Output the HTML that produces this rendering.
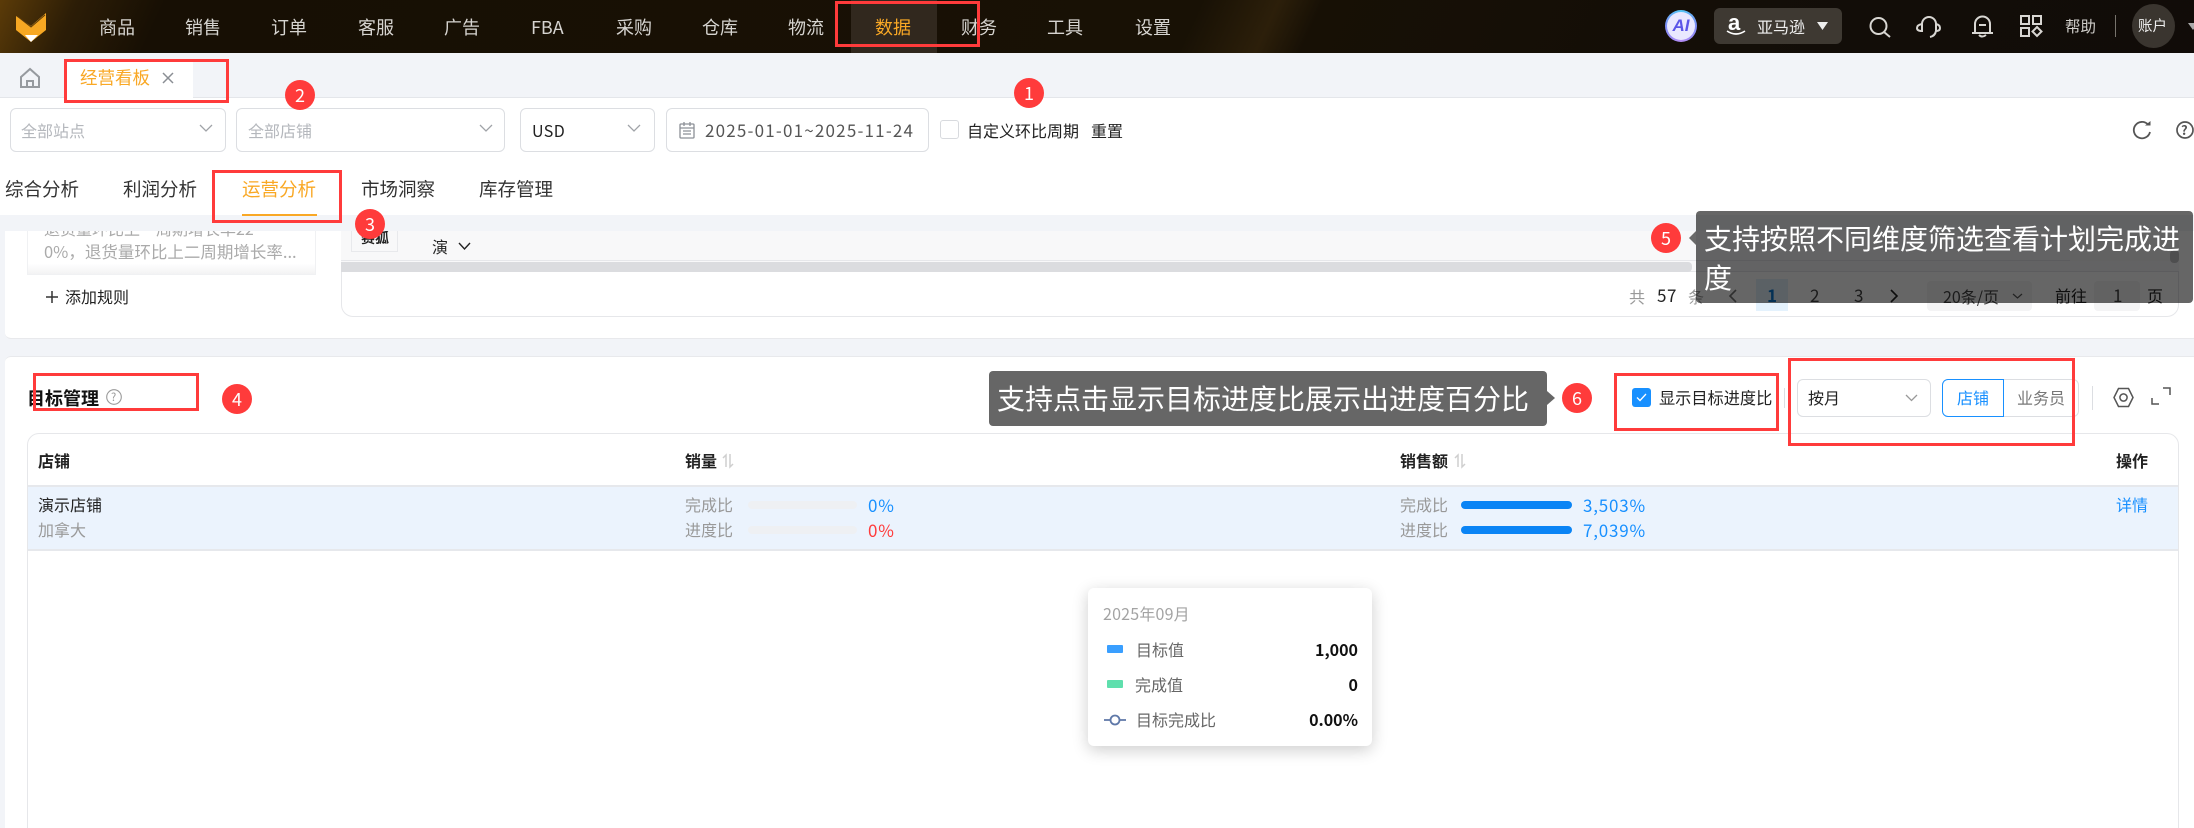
<!DOCTYPE html>
<html lang="zh"><head><meta charset="utf-8"><title>经营看板</title>
<style>
*{box-sizing:border-box;margin:0;padding:0}
html,body{width:2194px;height:828px;overflow:hidden;background:#f2f4f8}
body{position:relative;font-family:"Noto Sans CJK SC","Liberation Sans",sans-serif;color:#222;font-size:16px}
.a{position:absolute}
.t{position:absolute;white-space:nowrap;line-height:20px;height:20px}
.n{font-size:18px;color:#d6d4d0;top:17px}
.box{position:absolute;background:#fff;border:1px solid #dcdee2;border-radius:6px}
.r{position:absolute;border:3px solid #ff3b3b;z-index:30}
.c{position:absolute;width:30px;height:30px;border-radius:50%;background:#ff3b3b;color:#fff;text-align:center;line-height:30px;font-size:18px;z-index:31}
.tip{position:absolute;background:rgba(0,0,0,.6);color:#fff;font-size:28px;border-radius:4px;z-index:25;white-space:nowrap}
.g{color:#a3a7ad}
.b{font-weight:700;color:#222}
svg{position:absolute;overflow:visible}
.tab{font-size:18.500px;top:179px;color:#333}
.bar{position:absolute;height:8px;border-radius:4px}
.num{font-size:17px;letter-spacing:.8px}
</style></head><body>

<!-- top nav -->
<div class="a" style="left:0;top:0;width:2194px;height:53px;background:linear-gradient(115deg,#5b3b08 0,#2c1d06 70px,#170f04 150px,#181105 1090px,#2c1f0a 1160px,#171005 1200px,#120d08 1700px,#100c09 2194px)"></div>
<svg style="left:0;top:0" width="60" height="53" viewBox="0 0 60 53"><path d="M16 16l15 10 15-13v17L31 42 16 30z" fill="#f7a823"/><path d="M17 16l14 11 14-12" fill="none" stroke="#5a3a08" stroke-width="1"/><path d="M25 35h13l-7 7z" fill="#fff"/></svg>
<div class="a" style="left:851px;top:0;width:86px;height:53px;background:#31281e"></div>
<span class="t n" style="left:99px">商品</span>
<span class="t n" style="left:185px">销售</span>
<span class="t n" style="left:271px">订单</span>
<span class="t n" style="left:358px">客服</span>
<span class="t n" style="left:444px">广告</span>
<span class="t n" style="left:531px">FBA</span>
<span class="t n" style="left:616px">采购</span>
<span class="t n" style="left:702px">仓库</span>
<span class="t n" style="left:788px">物流</span>
<span class="t n" style="left:875px;color:#f9a825">数据</span>
<span class="t n" style="left:961px">财务</span>
<span class="t n" style="left:1047px">工具</span>
<span class="t n" style="left:1135px">设置</span>

<div class="a" style="left:1665px;top:10px;width:32px;height:32px;border-radius:50%;background:conic-gradient(#55c8f5,#7d8cf5,#b58cf5,#7d8cf5,#55c8f5)"></div>
<div class="a" style="left:1667px;top:12px;width:28px;height:28px;border-radius:50%;background:#e9e8ff;color:#5b55e8;font:italic 700 17px/28px 'Liberation Sans',sans-serif;text-align:center">AI</div>
<div class="a" style="left:1714px;top:8px;width:128px;height:36px;background:#3e3932;border-radius:6px"></div>
<span class="t" style="left:1728px;top:13px;font:700 22px/20px 'Liberation Sans',sans-serif;color:#fff">a</span>
<svg style="left:1726px;top:30px" width="20" height="6"><path d="M1 1q9 6 18 0" fill="none" stroke="#fff" stroke-width="1.600"/></svg>
<span class="t" style="left:1757px;top:16px;color:#eee">亚马逊</span>
<svg style="left:1817px;top:22px" width="11" height="8"><path d="M0 0h11L5.500 8z" fill="#eee"/></svg>
<svg style="left:1869px;top:17px" width="22" height="20" fill="none" stroke="#d8d6d2" stroke-width="2"><circle cx="9.500" cy="9" r="8"/><path d="M15 15l6 5"/></svg>
<svg style="left:1916px;top:15px" width="24" height="23" fill="none" stroke="#d8d6d2" stroke-width="2"><path d="M6 9a7 7 0 0 1 14 0M20 9v7q-1 5-6 6"/><path d="M6 9Q1 10 1 13t5 3zM20 9q4 1 4 4t-4 3"/></svg>
<svg style="left:1971px;top:15px" width="23" height="23" fill="none" stroke="#d8d6d2" stroke-width="2"><path d="M4 17V9a7.500 7.500 0 0 1 15 0v8M1 18h21M8 10h7M8 20q3 3 7 0"/></svg>
<svg style="left:2020px;top:15px" width="22" height="22" fill="none" stroke="#d8d6d2" stroke-width="2"><rect x="1" y="1" width="8" height="8"/><rect x="13" y="1" width="8" height="8"/><rect x="1" y="13" width="8" height="8"/><path d="M17 12l4.500 4.500L17 21l-4.500-4.500z"/></svg>
<span class="t" style="left:2065px;top:16px;font-size:15.500px;color:#cfcdc9">帮助</span>
<div class="a" style="left:2115px;top:15px;width:1px;height:22px;background:#77736c"></div>
<div class="a" style="left:2132px;top:4px;width:43px;height:44px;border-radius:50%;background:#3a352f"></div>
<span class="t" style="left:2138px;top:16px;font-size:14.500px;color:#eee">账户</span>
<svg style="left:2188px;top:23px" width="8" height="7"><path d="M0 0h10L5 7z" fill="#aaa"/></svg>

<!-- tab bar -->
<div class="a" style="left:0;top:97px;width:2194px;height:1px;background:#e4e6ea"></div>
<svg style="left:20px;top:68px" width="20" height="20" fill="none" stroke="#969a9f" stroke-width="2"><path d="M1 9l9-8 9 8v10H1zM7 19v-6h6v6"/></svg>
<div class="a" style="left:64px;top:59px;width:129px;height:39px;background:#fff;border-radius:4px 4px 0 0"></div>
<span class="t" style="left:80px;top:68px;font-size:17.500px;color:#f9a825">经营看板</span>
<svg style="left:162px;top:72px" width="12" height="12" stroke="#8a8e94" stroke-width="1.500"><path d="M1 1l10 10M11 1L1 11"/></svg>

<!-- filter area -->
<div class="a" style="left:0;top:98px;width:2194px;height:117px;background:#fff"></div>
<div class="box" style="left:10px;top:108px;width:216px;height:44px"></div>
<span class="t g" style="left:21px;top:120px;color:#b4b7bc">全部站点</span>
<div class="box" style="left:236px;top:108px;width:269px;height:44px"></div>
<span class="t g" style="left:248px;top:120px;color:#b4b7bc">全部店铺</span>
<div class="box" style="left:520px;top:108px;width:135px;height:44px"></div>
<span class="t" style="left:532px;top:120px;letter-spacing:.4px">USD</span>
<div class="box" style="left:666px;top:108px;width:263px;height:44px"></div>
<svg style="left:679px;top:121px" width="16" height="18" fill="none" stroke="#8c9096" stroke-width="1.300"><rect x="1" y="3" width="14" height="14" rx="1"/><path d="M1 7h14M5 1v4M11 1v4M4 10h8M4 13h8"/></svg>
<span class="t" style="left:705px;top:120px;color:#555;font-size:17px;letter-spacing:1.200px">2025-01-01~2025-11-24</span>
<svg style="left:199px;top:124px" width="14" height="9" fill="none" stroke="#a0a3a8" stroke-width="1.300"><path d="M1 1l6 6 6-6"/></svg>
<svg style="left:479px;top:124px" width="14" height="9" fill="none" stroke="#a0a3a8" stroke-width="1.300"><path d="M1 1l6 6 6-6"/></svg>
<svg style="left:627px;top:124px" width="14" height="9" fill="none" stroke="#a0a3a8" stroke-width="1.300"><path d="M1 1l6 6 6-6"/></svg>
<div class="a" style="left:940px;top:120px;width:19px;height:19px;border:1px solid #d8dade;border-radius:3px"></div>
<span class="t" style="left:967px;top:120px">自定义环比周期</span>
<span class="t" style="left:1091px;top:120px">重置</span>
<svg style="left:2133px;top:121px" width="18" height="18" fill="none" stroke="#555" stroke-width="1.800"><path d="M15 3.500A8.200 8.200 0 1 0 17 11"/><path d="M12 4.500h5.500V0z" fill="#555" stroke="none"/></svg>
<svg style="left:2176px;top:121px" width="18" height="18" fill="none" stroke="#555" stroke-width="1.700"><circle cx="9" cy="9" r="8"/></svg>
<span class="t" style="left:2181px;top:120px;font-size:13px;font-weight:700;color:#555">?</span>

<span class="t tab" style="left:5px">综合分析</span>
<span class="t tab" style="left:123px">利润分析</span>
<span class="t tab" style="left:242px;color:#f9a825">运营分析</span>
<span class="t tab" style="left:361px">市场洞察</span>
<span class="t tab" style="left:479px">库存管理</span>
<div class="a" style="left:242px;top:214px;width:75px;height:2px;background:#f9a825"></div>

<!-- card 1 -->
<div class="a" style="left:5px;top:231px;width:2194px;height:108px;background:#fff;border-radius:0 0 6px 6px;border-bottom:1px solid #e8e9ec;overflow:hidden"></div>
<div class="a" style="left:27px;top:231px;width:289px;height:44px;overflow:hidden;background:linear-gradient(#fff 75%,#f3f3f4);border:1px solid #f0f1f3;border-top:0"></div>
<div class="a" style="left:44px;top:231px;width:250px;height:6px;overflow:hidden"><span class="t g" style="left:0;top:-13px;color:#aaa;font-size:16px">退货量环比上一周期增长率22</span></div>
<span class="t" style="left:44px;top:241px;color:#aaa;font-size:16.500px">0%，退货量环比上二周期增长率...</span>
<svg style="left:45px;top:290px" width="14" height="14" stroke="#333" stroke-width="1.500"><path d="M7 1v12M1 7h12"/></svg>
<span class="t" style="left:65px;top:286px">添加规则</span>

<div class="a" style="left:341px;top:231px;width:1838px;height:86px;background:#fff;border:1px solid #e6e7ea;border-top:0;border-radius:0 0 12px 12px"></div>
<div class="a" style="left:341px;top:231px;width:1838px;height:30px;background:#f8f8f9;border-bottom:1px solid #e6e7ea"></div>
<div class="a" style="left:341px;top:261px;width:1838px;height:11px;background:#f8f8f9;border-bottom:1px solid #e6e7ea"></div>
<div class="a" style="left:341px;top:262px;width:1351px;height:10px;background:#dbdcdf;border-radius:0 4px 4px 0"></div>
<div class="a" style="left:2070px;top:231px;width:109px;height:30px;background:#f4f4f5"></div>
<div class="a" style="left:2170px;top:250px;width:9px;height:13px;background:#c4c4c6;border-radius:4px"></div>
<div class="a" style="left:351px;top:231px;width:47px;height:21px;border:1px solid #e8e9ec;border-top:0;overflow:hidden"><span class="t b" style="left:9px;top:-3px;font-size:14px">赛狐</span></div>
<span class="t" style="left:432px;top:236px">演</span>
<svg style="left:458px;top:242px" width="13" height="9" fill="none" stroke="#222" stroke-width="1.400"><path d="M1 1l5.500 6L12 1"/></svg>
<span class="t g" style="left:1629px;top:286px;color:#999">共</span>
<span class="t" style="left:1657px;top:285px;font-size:17px;color:#222;letter-spacing:.6px">57</span>
<span class="t g" style="left:1688px;top:286px;color:#999">条</span>
<svg style="left:1729px;top:289px" width="8" height="14" fill="none" stroke="#777" stroke-width="1.600"><path d="M7 1L1 7l6 6"/></svg>
<div class="a" style="left:1756px;top:279px;width:32px;height:32px;background:#e4f2fd"></div>
<span class="t" style="left:1767px;top:285px;font-weight:700;color:#0a7bd5;font-size:17px">1</span>
<span class="t" style="left:1810px;top:285px;color:#444;font-size:17px">2</span>
<span class="t" style="left:1854px;top:285px;color:#444;font-size:17px">3</span>
<svg style="left:1890px;top:289px" width="8" height="14" fill="none" stroke="#222" stroke-width="1.600"><path d="M1 1l6 6-6 6"/></svg>
<div class="a" style="left:1927px;top:281px;width:105px;height:30px;background:#f4f4f5;border-radius:4px"></div>
<span class="t" style="left:1943px;top:286px;color:#444;font-size:16px">20条/页</span>
<svg style="left:2012px;top:293px" width="11" height="7" fill="none" stroke="#555" stroke-width="1.200"><path d="M1 1l4.500 4L10 1"/></svg>
<span class="t" style="left:2055px;top:285px;color:#222">前往</span>
<div class="a" style="left:2094px;top:281px;width:46px;height:30px;background:#f4f4f5;border-radius:4px"></div>
<span class="t" style="left:2113px;top:285px;color:#444;font-size:17px">1</span>
<span class="t" style="left:2147px;top:285px;color:#222">页</span>

<!-- card 2 -->
<div class="a" style="left:5px;top:356px;width:2194px;height:480px;background:#fff;border-radius:6px;border-top:1px solid #e8e9ec"></div>
<span class="t b" style="left:27px;top:388px;font-size:18px;color:#111">目标管理</span>
<svg style="left:106px;top:389px" width="16" height="16" fill="none" stroke="#999" stroke-width="1.100"><circle cx="8" cy="8" r="7.300"/></svg>
<span class="t" style="left:111px;top:387px;font-size:11px;color:#999">?</span>

<div class="a" style="left:1632px;top:388px;width:19px;height:19px;background:#1890ff;border-radius:3px"></div>
<svg style="left:1635px;top:392px" width="13" height="11" fill="none" stroke="#fff" stroke-width="1.300"><path d="M2 5.500l3 3L11 2"/></svg>
<span class="t" style="left:1659px;top:387px;font-size:16.200px">显示目标进度比</span>
<div class="a" style="left:1784px;top:388px;width:1px;height:20px;background:#dcdee2"></div>
<div class="box" style="left:1797px;top:379px;width:134px;height:38px"></div>
<span class="t" style="left:1808px;top:387px">按月</span>
<svg style="left:1905px;top:394px" width="13" height="8" fill="none" stroke="#999" stroke-width="1.300"><path d="M1 1l5.500 5.500L12 1"/></svg>
<div class="box" style="left:2000px;top:379px;width:79px;height:38px;border-radius:0 6px 6px 0"></div>
<div class="a" style="left:1942px;top:379px;width:62px;height:38px;border:1px solid #1890ff;border-radius:6px 0 0 6px;background:#fff"></div>
<span class="t" style="left:1957px;top:387px;color:#1890ff">店铺</span>
<span class="t" style="left:2017px;top:387px;color:#777">业务员</span>
<div class="a" style="left:2092px;top:386px;width:1px;height:24px;background:#dcdee2"></div>
<svg style="left:2113px;top:387px" width="21" height="21" fill="none" stroke="#555" stroke-width="1.500"><path d="M5.500 1.500h10L20 10.500l-4.500 9h-10L1 10.500z"/><circle cx="10.500" cy="10.500" r="3.600"/></svg>
<svg style="left:2151px;top:387px" width="20" height="18" fill="none" stroke="#555" stroke-width="1.500"><path d="M12 1h7v7M1 11v6h7"/></svg>

<!-- table -->
<div class="a" style="left:27px;top:433px;width:2152px;height:420px;border:1px solid #e6e7ea;border-radius:12px 12px 0 0;background:#fff"></div>
<div class="a" style="left:28px;top:485px;width:2150px;height:66px;background:#ebf3fd;border-top:2px solid #e6e8ec;border-bottom:2px solid #e6e8ec"></div>
<span class="t b" style="left:38px;top:450px">店铺</span>
<span class="t b" style="left:685px;top:450px">销量</span>
<span class="t b" style="left:1400px;top:450px">销售额</span>
<span class="t b" style="left:2116px;top:450px">操作</span>
<svg style="left:722px;top:453px" width="11" height="15" stroke="#cfcfcf" stroke-width="1.500" fill="none"><path d="M4 14V2L1 5M8 1v13l3-3"/></svg>
<svg style="left:1454px;top:453px" width="11" height="15" stroke="#cfcfcf" stroke-width="1.500" fill="none"><path d="M4 14V2L1 5M8 1v13l3-3"/></svg>
<span class="t" style="left:38px;top:494px">演示店铺</span>
<span class="t" style="left:38px;top:519px;color:#999">加拿大</span>
<span class="t" style="left:685px;top:494px;color:#999">完成比</span>
<span class="t" style="left:685px;top:519px;color:#999">进度比</span>
<div class="bar" style="left:748px;top:501px;width:109px;background:#eef0f3"></div>
<div class="bar" style="left:748px;top:526px;width:109px;background:#eef0f3"></div>
<span class="t num" style="left:868px;top:495px;color:#1890ff">0%</span>
<span class="t num" style="left:868px;top:520px;color:#ff3b3b">0%</span>
<span class="t" style="left:1400px;top:494px;color:#999">完成比</span>
<span class="t" style="left:1400px;top:519px;color:#999">进度比</span>
<div class="bar" style="left:1461px;top:501px;width:111px;background:#0a84f5"></div>
<div class="bar" style="left:1461px;top:526px;width:111px;background:#0a84f5"></div>
<span class="t num" style="left:1583px;top:495px;color:#1890ff">3,503%</span>
<span class="t num" style="left:1583px;top:520px;color:#1890ff">7,039%</span>
<span class="t" style="left:2116px;top:494px;color:#1890ff">详情</span>

<!-- chart tooltip -->
<div class="a" style="left:1088px;top:588px;width:284px;height:158px;background:#fff;border-radius:6px;box-shadow:0 4px 16px rgba(0,0,0,.2)"></div>
<span class="t" style="left:1103px;top:603px;color:#a3a3a3;letter-spacing:.2px">2025年09月</span>
<div class="a" style="left:1107px;top:645px;width:16px;height:8px;background:#3a9fff;border-radius:1px"></div>
<div class="a" style="left:1107px;top:680px;width:16px;height:8px;background:#5fdfad;border-radius:1px"></div>
<svg style="left:1104px;top:713px" width="22" height="14" fill="none" stroke="#5f78a8" stroke-width="1.800"><path d="M0 7h6M16 7h6"/><circle cx="11" cy="7" r="4.500"/></svg>
<span class="t" style="left:1136px;top:639px;color:#666">目标值</span>
<span class="t" style="left:1135px;top:674px;color:#666">完成值</span>
<span class="t" style="left:1136px;top:709px;color:#666">目标完成比</span>
<span class="t" style="right:836px;top:639px;font-weight:700;color:#111">1,000</span>
<span class="t" style="right:836px;top:674px;font-weight:700;color:#111">0</span>
<span class="t" style="right:836px;top:709px;font-weight:700;color:#111">0.00%</span>

<!-- annotations -->
<div class="tip" style="left:1696px;top:211px;width:497px;height:92px;padding:8px 8px;line-height:39px;white-space:normal">支持按照不同维度筛选查看计划完成进度</div>
<svg style="left:1689px;top:231px;z-index:25" width="7" height="14"><path d="M7 0v14L0 7z" fill="#6a6a6a"/></svg>
<div class="tip" style="left:989px;top:371px;width:558px;height:55px;padding-left:8px;line-height:55px">支持点击显示目标进度比展示出进度百分比</div>
<svg style="left:1547px;top:391px;z-index:25" width="8" height="14"><path d="M0 0v14l8-7z" fill="#666"/></svg>

<div class="r" style="left:835px;top:1px;width:145px;height:46px"></div>
<div class="r" style="left:64px;top:59px;width:165px;height:44px"></div>
<div class="r" style="left:212px;top:170px;width:130px;height:53px"></div>
<div class="r" style="left:33px;top:373px;width:166px;height:38px"></div>
<div class="r" style="left:1614px;top:373px;width:165px;height:58px"></div>
<div class="r" style="left:1788px;top:358px;width:287px;height:88px"></div>

<div class="c" style="left:1014px;top:78px">1</div>
<div class="c" style="left:285px;top:80px">2</div>
<div class="c" style="left:355px;top:209px">3</div>
<div class="c" style="left:222px;top:384px">4</div>
<div class="c" style="left:1651px;top:223px">5</div>
<div class="c" style="left:1562px;top:383px">6</div>
</body></html>
